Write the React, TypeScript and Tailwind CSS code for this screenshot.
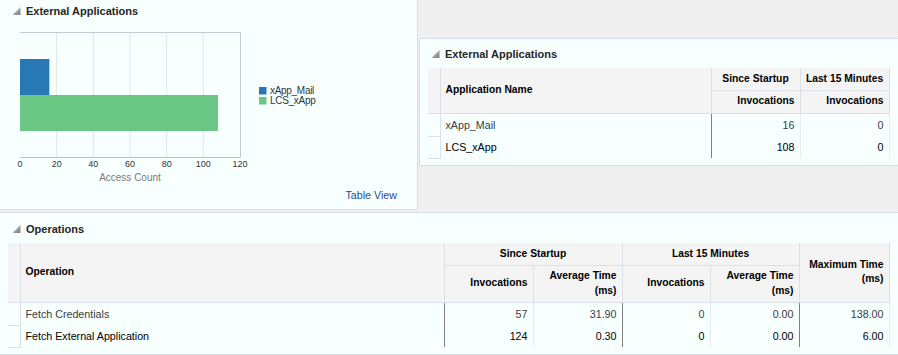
import React from "react";

const FONT = "font-['Liberation_Sans',Arial,sans-serif]";
const DOTS =
  "bg-[image:repeating-conic-gradient(#e9e9e9_0_25%,#f6f6f6_0_50%)] bg-[length:2px_2px]";
const PANEL_BG = "bg-[#f7ffff]";
const LINE = "border-[#d6dee6]";

function Tri() {
  return (
    <svg width="9" height="8" viewBox="0 0 9 8" className="block shrink-0">
      <defs>
        <linearGradient id="trig" x1="0" y1="0" x2="1" y2="1">
          <stop offset="0" stopColor="#d2d2d2" />
          <stop offset="1" stopColor="#7a7a7a" />
        </linearGradient>
      </defs>
      <polygon points="8.5,0 8.5,8 0.5,8" fill="url(#trig)" />
    </svg>
  );
}

function Title({ text, pl }: { text: string; pl: string }) {
  return (
    <div className={`flex items-center gap-[5px] ${pl}`}>
      <Tri />
      <span className="text-[11px] font-bold text-[#262626] leading-[14px]">{text}</span>
    </div>
  );
}

function Chart() {
  const grid = [1, 2, 3, 4, 5].map((k) => 20 + (k * 220) / 6);
  const ticks = [0, 20, 40, 60, 80, 100, 120];
  const sf = "Liberation Sans, Arial, sans-serif";
  return (
    <svg width="330" height="165" viewBox="0 21 330 165" className="block">
      {grid.map((x) => (
        <line key={x} x1={x} y1={32} x2={x} y2={157} stroke="#dde8ea" strokeWidth="1" />
      ))}
      <rect x="20" y="59" width={(16 * 220) / 120} height="36" fill="#2878b5" />
      <rect x="20" y="95" width={(108 * 220) / 120} height="36" fill="#6bc784" />
      <line x1="20" y1="32.5" x2="240.5" y2="32.5" stroke="#c3cbd8" />
      <line x1="240.5" y1="32" x2="240.5" y2="157.5" stroke="#c3cbd8" />
      <line x1="20" y1="157.5" x2="240.5" y2="157.5" stroke="#b9c1cc" />
      {ticks.map((t) => (
        <text
          key={t}
          x={20 + (t * 220) / 120}
          y={167}
          fontSize="9"
          fontFamily={sf}
          textAnchor="middle"
          fill="#333"
        >
          {t}
        </text>
      ))}
      <text x="130" y="180.5" fontSize="10" fontFamily={sf} textAnchor="middle" fill="#7a7a7a">
        Access Count
      </text>
      <rect x="259" y="87" width="7.5" height="7.5" fill="#2878b5" />
      <rect x="259" y="97" width="7.5" height="7.5" fill="#6bc784" />
      <text x="270" y="94.3" fontSize="10" letterSpacing="-0.3" fontFamily={sf} fill="#2f3640">
        xApp_Mail
      </text>
      <text x="270" y="104.3" fontSize="10" letterSpacing="-0.3" fontFamily={sf} fill="#2f3640">
        LCS_xApp
      </text>
    </svg>
  );
}

const HD = "bg-[#f4f4f4] border-r border-b border-[#d9e0e8] font-bold text-[10.3px] text-black p-0 leading-[14.5px]";
const SEL = "border-r border-b border-[#d9e0e8] p-0";
const NUM = "text-right pr-[5px] border-r border-[#e6eded] p-0";
const NUMD = "text-right pr-[5px] border-r border-[#7f7f7f] p-0";

function AppTable() {
  const rows = [
    { n: "xApp_Mail", a: "16", b: "0", c: "text-[#3c3c3c]" },
    { n: "LCS_xApp", a: "108", b: "0", c: "text-black" },
  ];
  return (
    <table className="border-collapse table-fixed w-[461px] ml-[8px]">
      <colgroup>
        <col className="w-[12px]" />
        <col className="w-[271px]" />
        <col className="w-[89px]" />
        <col className="w-[89px]" />
      </colgroup>
      <thead>
        <tr className="h-[22px]">
          <th rowSpan={2} className={HD}></th>
          <th rowSpan={2} className={`${HD} text-left pl-[5px]`}>
            Application Name
          </th>
          <th className={`${HD} text-center`}>Since Startup</th>
          <th className={`${HD} text-center`}>Last 15 Minutes</th>
        </tr>
        <tr className="h-[23px]">
          <th className={`${HD} text-right pr-[5px]`}>Invocations</th>
          <th className={`${HD} text-right pr-[5px]`}>Invocations</th>
        </tr>
      </thead>
      <tbody>
        {rows.map((r, i) => (
          <tr key={r.n} className={`${i === 0 ? "h-[23px]" : "h-[22px]"} text-[10.7px] ${r.c}`}>
            <td className={SEL}></td>
            <td className="pl-[5px] p-0 border-r border-[#7f7f7f]">{r.n}</td>
            <td className={NUM}>{r.a}</td>
            <td className={NUM}>{r.b}</td>
          </tr>
        ))}
      </tbody>
    </table>
  );
}

function OpsTable() {
  const rows = [
    { n: "Fetch Credentials", v: ["57", "31.90", "0", "0.00", "138.00"], c: "text-[#3c3c3c]" },
    { n: "Fetch External Application", v: ["124", "0.30", "0", "0.00", "6.00"], c: "text-black" },
  ];
  return (
    <table className="border-collapse table-fixed w-[881px] ml-[8px]">
      <colgroup>
        <col className="w-[12px]" />
        <col className="w-[424px]" />
        <col className="w-[89px]" />
        <col className="w-[89px]" />
        <col className="w-[88px]" />
        <col className="w-[89px]" />
        <col className="w-[90px]" />
      </colgroup>
      <thead>
        <tr className="h-[22px]">
          <th rowSpan={2} className={HD}></th>
          <th rowSpan={2} className={`${HD} text-left pl-[5px]`}>
            Operation
          </th>
          <th colSpan={2} className={`${HD} text-center`}>
            Since Startup
          </th>
          <th colSpan={2} className={`${HD} text-center`}>
            Last 15 Minutes
          </th>
          <th rowSpan={2} className={`${HD} text-right pr-[5px]`}>
            Maximum Time
            <br />
            (ms)
          </th>
        </tr>
        <tr className="h-[37px]">
          <th className={`${HD} text-right pr-[5px]`}>Invocations</th>
          <th className={`${HD} text-right pr-[5px]`}>
            Average Time
            <br />
            (ms)
          </th>
          <th className={`${HD} text-right pr-[5px]`}>Invocations</th>
          <th className={`${HD} text-right pr-[5px]`}>
            Average Time
            <br />
            (ms)
          </th>
        </tr>
      </thead>
      <tbody>
        {rows.map((r, i) => (
          <tr key={r.n} className={`${i === 0 ? "h-[23px]" : "h-[22px]"} text-[10.7px] ${r.c}`}>
            <td className={SEL}></td>
            <td className="pl-[5px] p-0 border-r border-[#7f7f7f]">{r.n}</td>
            <td className={NUM}>{r.v[0]}</td>
            <td className={NUMD}>{r.v[1]}</td>
            <td className={NUM}>{r.v[2]}</td>
            <td className={NUMD}>{r.v[3]}</td>
            <td className={NUM}>{r.v[4]}</td>
          </tr>
        ))}
      </tbody>
    </table>
  );
}

export default function App() {
  return (
    <div className={`w-[898px] h-[355px] overflow-hidden flex flex-col ${DOTS} ${FONT}`}>
      <div className="flex h-[210px] shrink-0">
        <div className={`w-[418px] h-[210px] border-r border-b ${LINE} ${PANEL_BG} flex flex-col`}>
          <div className="h-[21px] flex items-center">
            <Title text="External Applications" pl="pl-[12px]" />
          </div>
          <Chart />
          <div className="flex justify-end pr-[20px] mt-[2px]">
            <span className="text-[10.7px] leading-[14px] text-[#2c4791]">Table View</span>
          </div>
        </div>
        <div className="flex-1 pl-px pt-[38px]">
          <div className={`h-[128px] border-t border-l border-b ${LINE} ${PANEL_BG}`}>
            <div className="h-[29px] flex items-center">
              <Title text="External Applications" pl="pl-[11px]" />
            </div>
            <AppTable />
          </div>
        </div>
      </div>
      <div className={`mt-[2px] h-[143px] border-t border-b ${LINE} ${PANEL_BG}`}>
        <div className="h-[30px] flex items-center pt-[2px]">
          <Title text="Operations" pl="pl-[12px]" />
        </div>
        <OpsTable />
      </div>
    </div>
  );
}
